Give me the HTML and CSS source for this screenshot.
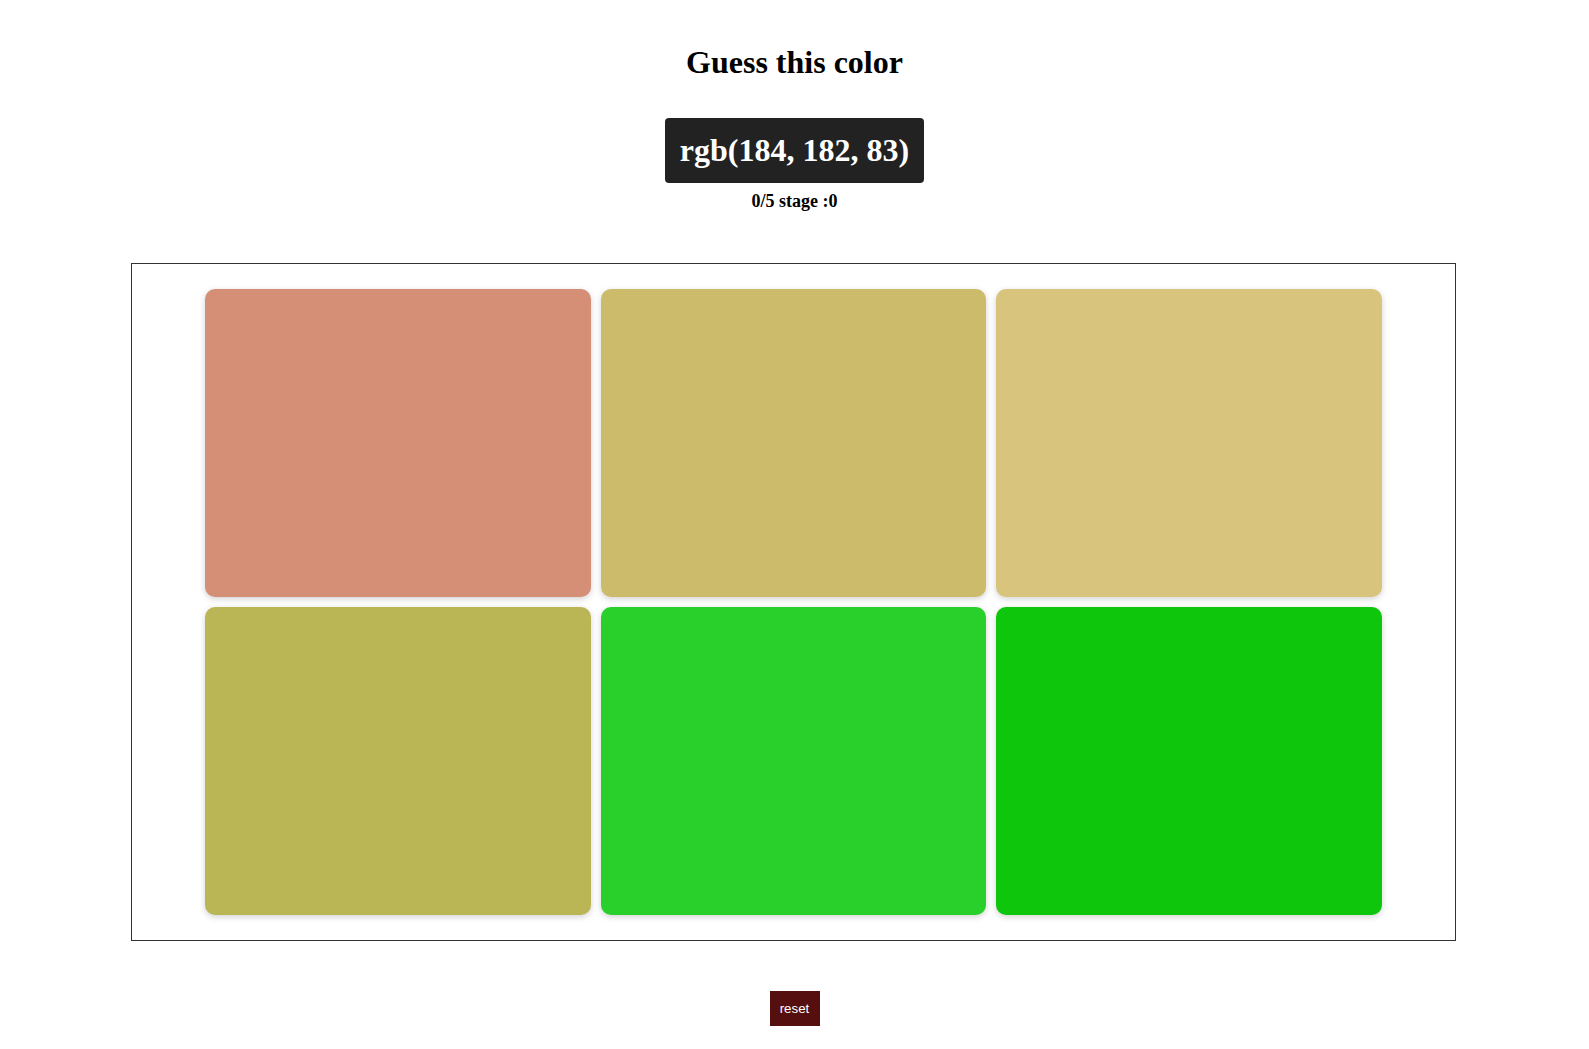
FILE: index.html
```html
<!DOCTYPE html>
<html lang="en">
<head>
<meta charset="utf-8">
<title>Guess this color</title>
<link rel="stylesheet" href="styles.css">
</head>
<body>
<div class="page">
  <h1 class="title">Guess this color</h1>
  <div class="target">rgb(184, 182, 83)</div>
  <p class="status">0/5 stage :0</p>
  <div class="board">
    <div class="tiles">
      <div class="tile" style="background: rgb(212, 143, 118);"></div>
      <div class="tile" style="background: rgb(205, 187, 108);"></div>
      <div class="tile" style="background: rgb(216, 196, 124);"></div>
      <div class="tile" style="background: rgb(186, 182, 85);"></div>
      <div class="tile" style="background: rgb(41, 208, 44);"></div>
      <div class="tile" style="background: rgb(14, 198, 12);"></div>
    </div>
  </div>
  <div class="actions">
    <button class="reset">reset</button>
  </div>
</div>
</body>
</html>
```

FILE: styles.css
```css
html, body {
  margin: 0;
  padding: 0;
  background: #ffffff;
}

body {
  font-family: "Liberation Serif", "Times New Roman", serif;
  color: #000;
}

.page {
  display: flex;
  flex-direction: column;
  align-items: center;
}

.title {
  margin: 44px 0 0;
  font-size: 32px;
  line-height: 36px;
  font-weight: bold;
}

.target {
  margin-top: 38px;
  background: #222222;
  color: #ffffff;
  font-size: 32px;
  font-weight: bold;
  line-height: 37px;
  padding: 14px 15px;
  border-radius: 4px;
}

.status {
  margin: 8px 0 0;
  font-size: 18px;
  line-height: 21px;
  font-weight: bold;
}

.board {
  box-sizing: border-box;
  width: 1325px;
  margin-top: 51px;
  margin-right: 2px;
  border: 1px solid #333333;
  padding: 20px;
}

.tiles {
  display: flex;
  flex-wrap: wrap;
  justify-content: center;
}

.tile {
  width: 385.5px;
  height: 308px;
  margin: 5px;
  border-radius: 10px;
  box-shadow: 0 2px 6px rgba(0, 0, 0, 0.18);
}

.actions {
  margin-top: 50px;
  display: flex;
  justify-content: center;
}

.reset {
  font-family: "Liberation Sans", Arial, sans-serif;
  font-size: 13.33px;
  line-height: 15px;
  color: #ffffff;
  background: #560f0f;
  border: none;
  padding: 10px;
  width: 50px;
  border-radius: 0;
}
```
